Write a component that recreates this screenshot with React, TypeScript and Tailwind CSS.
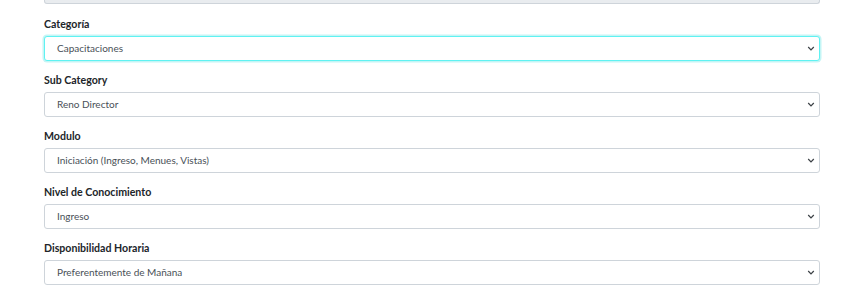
const fields = [
  { label: "Categoría", value: "Capacitaciones", focused: true },
  { label: "Sub Category", value: "Reno Director" },
  { label: "Modulo", value: "Iniciación (Ingreso, Menues, Vistas)" },
  { label: "Nivel de Conocimiento", value: "Ingreso" },
  { label: "Disponibilidad Horaria", value: "Preferentemente de Mañana" },
];

const Chevron = () => (
  <svg width="8" height="5" viewBox="0 0 8 5" className="shrink-0">
    <path d="M1.2 1 L4 3.8 L6.8 1" fill="none" stroke="#3a3f44" strokeWidth="1.2" />
  </svg>
);

interface FieldProps {
  label: string;
  value: string;
  focused?: boolean;
}

const SelectField = ({ label, value, focused }: FieldProps) => (
  <div className="mb-[12px]">
    <div className="mb-[5px] text-[10.6px] font-bold leading-[14px] text-[#212529]">{label}</div>
    <div
      className={
        focused
          ? "flex h-[25px] items-center justify-between rounded-[3px] border border-[#5ff2f2] bg-white pl-[12px] pr-[4px] shadow-[0_0_0_1.5px_#c4f5f5]"
          : "flex h-[25px] items-center justify-between rounded-[3px] border border-[#ced4da] bg-white pl-[12px] pr-[4px]"
      }
    >
      <span className="text-[10px] text-[#495057]">{value}</span>
      <Chevron />
    </div>
  </div>
);

export default function App() {
  return (
    <div className="h-[294px] w-[861px] overflow-hidden bg-white font-['Lato',sans-serif]">
      <div className="ml-[44px] w-[776px]">
        <div className="h-[4px] rounded-b-[3px] border-x border-b border-[#ced4da] bg-[#e9ecef]" />
        <div className="mt-[13px]">
          {fields.map((f) => (
            <SelectField key={f.label} label={f.label} value={f.value} focused={f.focused} />
          ))}
        </div>
      </div>
    </div>
  );
}
